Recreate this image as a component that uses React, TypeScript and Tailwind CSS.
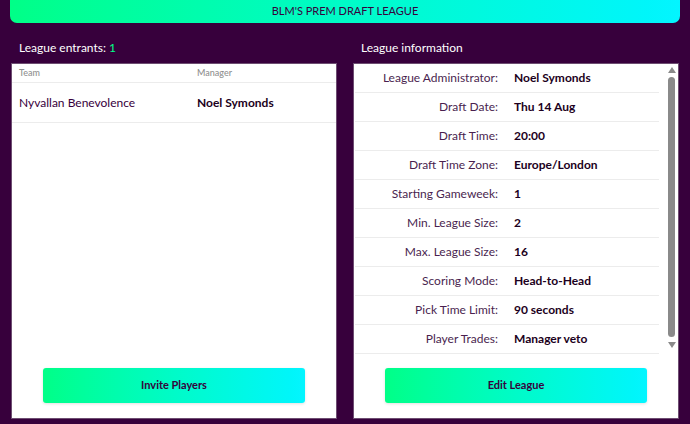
import React from "react";

const info: [string, string][] = [
  ["League Administrator:", "Noel Symonds"],
  ["Draft Date:", "Thu 14 Aug"],
  ["Draft Time:", "20:00"],
  ["Draft Time Zone:", "Europe/London"],
  ["Starting Gameweek:", "1"],
  ["Min. League Size:", "2"],
  ["Max. League Size:", "16"],
  ["Scoring Mode:", "Head-to-Head"],
  ["Pick Time Limit:", "90 seconds"],
  ["Player Trades:", "Manager veto"],
];

function GradientButton({ label }: { label: string }) {
  return (
    <button className="h-[35px] w-[262px] rounded-[3px] bg-gradient-to-r from-[#00ff87] to-[#04f5ff] text-[11px] font-bold text-[#37003c] shadow-[0_1px_3px_rgba(0,0,0,0.12)]">
      {label}
    </button>
  );
}

export default function App() {
  return (
    <div className="h-[424px] w-[690px] overflow-hidden bg-[#37003c] font-['Lato',sans-serif]">
      {/* Title bar */}
      <div className="mx-[10px] flex h-[23px] items-center justify-center rounded-b-[7px] bg-gradient-to-r from-[#00ff87] to-[#04f5ff] text-[11px] text-[#37003c]">
        BLM'S PREM DRAFT LEAGUE
      </div>

      <div className="mt-[16px] flex gap-[16px] px-[11px]">
        {/* Left column */}
        <div className="flex w-[326px] flex-col">
          <h2 className="mb-[7px] pl-[8px] pt-[1px] text-[12px] leading-[16px] text-white">
            League entrants: <span className="text-[#00ff87]">1</span>
          </h2>
          <div className="flex h-[356px] flex-col border border-[#6d4d71] bg-white">
            <div className="flex h-[19px] items-center border-b border-[#ececec] px-[7px] text-[9px] font-medium text-[#8f8f8f]">
              <span className="w-[178px]">Team</span>
              <span>Manager</span>
            </div>
            <div className="flex h-[40px] items-center border-b border-[#ececec] px-[7px] text-[12px]">
              <span className="w-[178px] text-[#37003c]">Nyvallan Benevolence</span>
              <span className="font-bold text-[#1c0020]">Noel Symonds</span>
            </div>
            <div className="mt-auto mb-[15px] flex justify-center">
              <GradientButton label="Invite Players" />
            </div>
          </div>
        </div>

        {/* Right column */}
        <div className="flex w-[326px] flex-col">
          <h2 className="mb-[7px] pl-[8px] pt-[1px] text-[12px] leading-[16px] text-white">League information</h2>
          <div className="flex h-[356px] flex-col border border-[#6d4d71] bg-white">
            <div className="flex">
              <div className="flex-1 pl-[1px] pr-[7px]">
                {info.map(([k, v]) => (
                  <div key={k} className="flex h-[29px] items-center border-b border-[#ececec] text-[12px]">
                    <span className="w-[143px] text-right text-[#4a1f4f]">{k}</span>
                    <span className="pl-[16px] font-bold text-[#1c0020]">{v}</span>
                  </div>
                ))}
              </div>
              {/* scrollbar */}
              <div className="flex w-[12px] flex-col items-center pt-[3px] pr-[1px]">
                <svg width="8" height="6" viewBox="0 0 8 6"><path d="M4 0L8 6H0z" fill="#8a8a8a" /></svg>
                <div className="mt-[4px] h-[260px] w-[7px] rounded-[4px] bg-[#8a8a8a]" />
                <svg className="mt-[5px]" width="8" height="6" viewBox="0 0 8 6"><path d="M0 0h8L4 6z" fill="#8a8a8a" /></svg>
              </div>
            </div>
            <div className="mt-auto mb-[15px] flex justify-center">
              <GradientButton label="Edit League" />
            </div>
          </div>
        </div>
      </div>
    </div>
  );
}
